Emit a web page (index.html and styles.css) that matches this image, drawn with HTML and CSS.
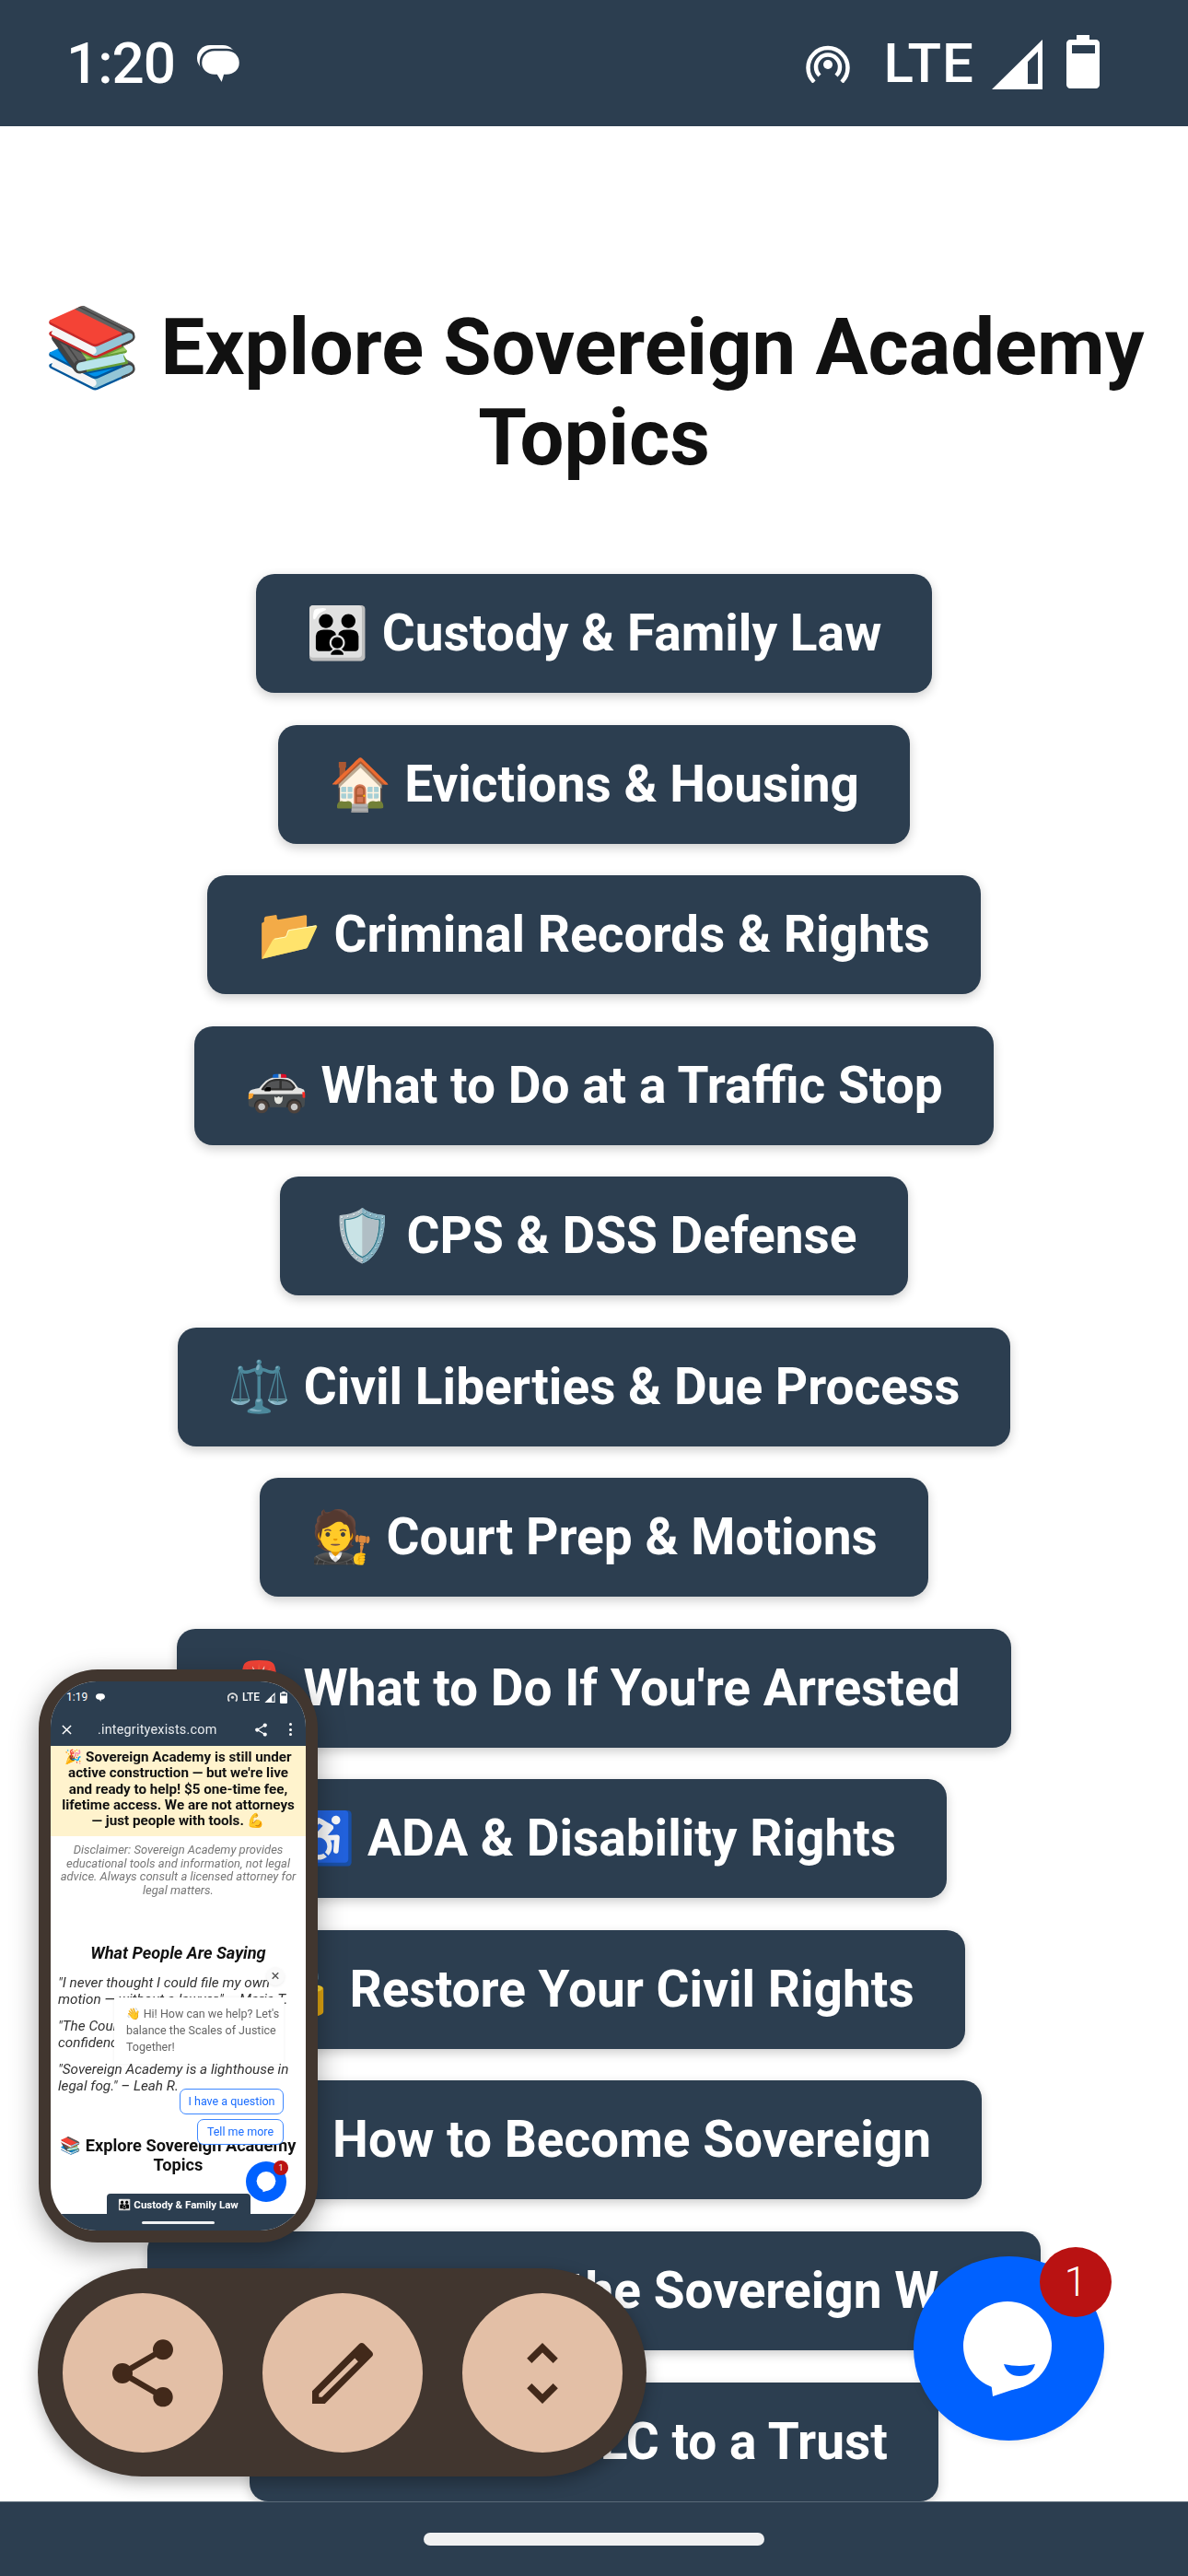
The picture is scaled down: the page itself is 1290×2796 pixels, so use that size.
FILE: index.html
```html
<!DOCTYPE html>
<html lang="en">
<head><meta charset="utf-8"><title>Explore Sovereign Academy Topics</title><link rel="stylesheet" href="styles.css"></head>
<body>
<div class="screen">
  <header class="status">
    <span class="time">1:20</span>
    <svg class="ic-msg" viewBox="0 0 47 43"><rect x="0" y="0" width="42" height="28" rx="14" fill="#fff"/><path fill="#fff" stroke="#2c3e50" stroke-width="2.5" d="M19 5h13c9 0 15 6 15 14s-6 14-15 14h-2l-3 10-6-10h-2C10 33 4 27 4 19S10 5 19 5z"/></svg>
    <div class="status-right">
      <svg class="ic-hot" viewBox="0 0 48 42"><g fill="none" stroke="#fff" stroke-width="4.5" stroke-linecap="butt"><path d="M9 41A21.5 21.5 0 1 1 39 41"/><path d="M15 34A13 13 0 1 1 33 34"/></g><circle cx="24" cy="22" r="5" fill="#fff"/></svg>
      <span class="lte">LTE</span>
      <svg class="ic-sig" viewBox="0 0 55 54"><path fill="#fff" fill-rule="evenodd" d="M55 0V54H0ZM50 13 39 24V48H50Z"/></svg>
      <svg class="ic-bat" viewBox="0 0 36 58"><path fill="#fff" fill-rule="evenodd" d="M11 0h14v5h7c2 0 4 2 4 4v45c0 2-2 4-4 4H4c-2 0-4-2-4-4V9c0-2 2-4 4-4h7ZM6 11v9h25v-9Z"/></svg>
    </div>
  </header>

  <main class="main">
    <h1 class="title">📚 Explore Sovereign Academy Topics</h1>
    <nav class="list">
      <a class="btn">👪 Custody &amp; Family Law</a>
      <a class="btn">🏠 Evictions &amp; Housing</a>
      <a class="btn">📂 Criminal Records &amp; Rights</a>
      <a class="btn">🚓 What to Do at a Traffic Stop</a>
      <a class="btn">🛡️ CPS &amp; DSS Defense</a>
      <a class="btn">⚖️ Civil Liberties &amp; Due Process</a>
      <a class="btn">🧑‍⚖️ Court Prep &amp; Motions</a>
      <a class="btn">🚨 What to Do If You're Arrested</a>
      <a class="btn">♿ ADA &amp; Disability Rights</a>
      <a class="btn">🔓 Restore Your Civil Rights</a>
      <a class="btn">👑 How to Become Sovereign</a>
      <a class="btn">💼 Do Business the Sovereign Way</a>
      <a class="btn">🏛️ Deed an LLC to a Trust</a>
    </nav>
  </main>

  <footer class="navbar"><span class="handle"></span></footer>

  <aside class="phone">
    <div class="phone-inner">
      <div class="m-status">
        <span>1:19</span>
        <svg class="m-ic-msg" viewBox="0 0 47 43"><path fill="#fff" d="M19 5h13c9 0 15 6 15 14s-6 14-15 14h-2l-3 10-6-10h-2C10 33 4 27 4 19S10 5 19 5z"/></svg>
        <div class="m-right">
          <svg class="m-ic-hot" viewBox="0 0 48 42"><path fill="none" stroke="#ddd" stroke-width="8" d="M9 41A21.5 21.5 0 1 1 39 41"/><circle cx="24" cy="22" r="7" fill="#ddd"/></svg>
          <span class="m-lte">LTE</span>
          <svg class="m-ic-sig" viewBox="0 0 55 54"><path fill="#fff" fill-rule="evenodd" d="M55 0V54H0ZM50 13 39 24V48H50Z"/></svg>
          <svg class="m-ic-bat" viewBox="0 0 36 58"><path fill="#fff" fill-rule="evenodd" d="M11 0h14v5h7c2 0 4 2 4 4v45c0 2-2 4-4 4H4c-2 0-4-2-4-4V9c0-2 2-4 4-4h7ZM6 11v9h25v-9Z"/></svg>
        </div>
      </div>
      <div class="m-toolbar">
        <svg class="m-x" viewBox="0 0 12 12"><path d="M1 1 11 11M11 1 1 11" stroke="#fff" stroke-width="1.6"/></svg>
        <span class="m-url">.integrityexists.com</span>
        <svg class="m-share" viewBox="0 0 24 24"><path fill="#fff" d="M18 16.08c-.76 0-1.44.3-1.96.77L8.91 12.7c.05-.23.09-.46.09-.7s-.04-.47-.09-.7l7.05-4.11c.54.5 1.25.81 2.04.81 1.66 0 3-1.34 3-3s-1.34-3-3-3-3 1.34-3 3c0 .24.04.47.09.7L8.04 9.81C7.5 9.31 6.79 9 6 9c-1.66 0-3 1.34-3 3s1.34 3 3 3c.79 0 1.5-.31 2.04-.81l7.12 4.16c-.05.21-.08.43-.08.65 0 1.61 1.31 2.92 2.92 2.92s2.92-1.31 2.92-2.92-1.31-2.92-2.92-2.92z"/></svg>
        <span class="m-dots"><i></i><i></i><i></i></span>
      </div>
      <div class="m-page">
        <div class="m-banner">🎉 Sovereign Academy is still under active construction — but we're live and ready to help! $5 one-time fee, lifetime access. We are not attorneys — just people with tools. 💪</div>
        <p class="m-disc">Disclaimer: Sovereign Academy provides educational tools and information, not legal advice. Always consult a licensed attorney for legal matters.</p>
        <h3 class="m-h3">What People Are Saying</h3>
        <p class="m-q">"I never thought I could file my own motion — without a lawyer." – Maria T.</p>
        <p class="m-q">"The Court Prep guide gave me confidence at my hearing."</p>
        <p class="m-q">"Sovereign Academy is a lighthouse in legal fog." – Leah R.</p>
        <h2 class="m-h2">📚 Explore Sovereign Academy Topics</h2>
        <a class="m-btn">👪 Custody &amp; Family Law</a>
      </div>
      <div class="m-nav"><span class="m-handle"></span></div>

      <span class="m-close">×</span>
      <div class="m-pop">👋 Hi! How can we help? Let's<br>balance the Scales of Justice<br>Together!</div>
      <span class="m-chip m-chip-a">I have a question</span>
      <span class="m-chip m-chip-b">Tell me more</span>
      <span class="m-fab">
        <svg viewBox="0 0 204 200"><circle cx="102" cy="97" r="48" fill="#fff"/><path fill="#fff" d="M84 136 86 152 122 140Z"/></svg>
      </span>
      <span class="m-badge">1</span>
    </div>
  </aside>

  <aside class="pill">
    <span class="pill-btn"><svg viewBox="0 0 24 24"><path d="M18 16.08c-.76 0-1.44.3-1.96.77L8.91 12.7c.05-.23.09-.46.09-.7s-.04-.47-.09-.7l7.05-4.11c.54.5 1.25.81 2.04.81 1.66 0 3-1.34 3-3s-1.34-3-3-3-3 1.34-3 3c0 .24.04.47.09.7L8.04 9.81C7.5 9.31 6.79 9 6 9c-1.66 0-3 1.34-3 3s1.34 3 3 3c.79 0 1.5-.31 2.04-.81l7.12 4.16c-.05.21-.08.43-.08.65 0 1.61 1.31 2.92 2.92 2.92s2.92-1.31 2.92-2.92-1.31-2.92-2.92-2.92z"/></svg></span>
    <span class="pill-btn"><svg viewBox="0 0 24 24"><path fill-rule="evenodd" d="M3 21V17.25L16.96 3.29c.39-.39 1.02-.39 1.41 0l2.34 2.34c.39.39.39 1.02 0 1.41L6.75 21ZM5 19V18.1L15.6 7.5l1 1L5.9 19Z"/></svg></span>
    <span class="pill-btn"><svg viewBox="0 0 24 24"><path d="M12 5.83L15.17 9l1.41-1.41L12 3 7.41 7.59 8.83 9 12 5.83zm0 12.34L8.83 15l-1.41 1.41L12 21l4.59-4.59L15.17 15 12 18.17z"/></svg></span>
  </aside>

  <aside class="fab">
    <svg viewBox="0 0 207 200"><circle cx="102" cy="97" r="48" fill="#fff"/><path fill="#fff" d="M84 136 86 152 122 140Z"/><path fill="#0061ff" d="M98 117Q115 121 132 117Q128 130 115 130Q102 130 98 117Z"/></svg>
  </aside>
  <span class="fab-badge">1</span>
</div>
</body>
</html>
```
FILE: styles.css
```css
html,body{margin:0;padding:0}
body{width:1290px;height:2796px;overflow:hidden;background:#fff;font-family:Roboto,"Noto Color Emoji",sans-serif}
.screen{position:relative;width:1290px;height:2796px;display:flex;flex-direction:column;overflow:hidden}

.status{flex:none;height:137px;background:#2c3e50;color:#fff;display:flex;align-items:center;padding:0 96px 0 72px;box-sizing:border-box}
.time{font-size:62px;font-weight:500;letter-spacing:-1px}
.ic-msg{width:47px;height:43px;margin-left:24px;margin-top:4px}
.status-right{margin-left:auto;display:flex;align-items:center}
.ic-hot{width:48px;height:42px}
.lte{font-size:60px;font-weight:500;margin-left:36px;letter-spacing:1px}
.ic-sig{width:55px;height:54px;margin-left:19px;margin-top:2px}
.ic-bat{width:36px;height:58px;margin-left:26px;margin-top:-4px}

.main{flex:1;min-height:0;overflow:hidden}
.title{margin:191px 20px 0;font-size:85px;line-height:98px;font-weight:700;text-align:center;color:#111}
.list{display:flex;flex-direction:column;align-items:center;gap:34.55px;margin-top:99px}
.btn{flex:none;background:#2c3e50;color:#fff;font-size:55px;line-height:65px;font-weight:700;padding:32px 55px;border-radius:20px;box-shadow:0 4px 12px rgba(0,0,0,.2);white-space:nowrap}

.navbar{flex:none;height:81px;background:#2c3e50;display:flex;align-items:center;justify-content:center;border-top:1px solid #5a6a78;box-sizing:border-box}
.handle{width:370px;height:14px;border-radius:7px;background:#f0f1f2}

.phone{position:absolute;left:42px;top:1812px;width:303px;height:622px;box-sizing:border-box;padding:13px;background:#41362f;border-radius:64px;box-shadow:0 10px 30px rgba(0,0,0,.35)}
.phone-inner{position:relative;height:100%;background:#fff;border-radius:50px;overflow:hidden;display:flex;flex-direction:column;filter:blur(.5px)}
.m-status{flex:none;height:34px;background:#2c3e50;color:#fff;display:flex;align-items:center;padding:0 20px 0 17px;font-size:12px;box-sizing:border-box}
.m-ic-msg{width:11px;height:10px;margin-left:8px}
.m-right{margin-left:auto;display:flex;align-items:center;gap:5px}
.m-ic-hot{width:11px;height:10px}
.m-lte{font-size:12px;font-weight:500}
.m-ic-sig{width:12px;height:11px}
.m-ic-bat{width:8px;height:13px}
.m-toolbar{flex:none;height:36px;background:#2c3e50;display:flex;align-items:center;padding:0 15px 0 12px;box-sizing:border-box;color:#e8ebee}
.m-x{width:11px;height:11px}
.m-url{font-size:14.4px;margin-left:28px;letter-spacing:.2px}
.m-share{width:17px;height:17px;margin-left:auto}
.m-dots{display:flex;flex-direction:column;gap:2.5px;margin-left:22px}
.m-dots i{width:3px;height:3px;border-radius:50%;background:#fff}
.m-page{flex:1;min-height:0;overflow:hidden;text-align:center;color:#111}
.m-banner{height:98px;box-sizing:border-box;padding:4px 6px;background:#fff3cd;font-size:15.2px;line-height:17.3px;font-weight:700}
.m-disc{margin:0;padding:8px 8px 0;font-size:13px;line-height:14.6px;font-style:italic;color:#777}
.m-h3{margin:51px 0 14px;font-size:18.2px;line-height:20px;font-style:italic;font-weight:700}
.m-q{margin:0 0 12px;padding:0 8px;font-size:15.3px;line-height:17.5px;font-style:italic;text-align:left;color:#333}
.m-h2{margin:45px 0 21px;font-size:18.2px;line-height:21px;font-weight:700}
.m-btn{display:block;width:156px;height:40px;margin:0 auto;box-sizing:border-box;padding-top:4px;background:#2c3e50;color:#fff;font-size:11.5px;font-weight:700;line-height:16px;border-radius:4px;white-space:nowrap}
.m-nav{flex:none;height:18px;background:#2c3e50;display:flex;align-items:center;justify-content:center}
.m-handle{width:79px;height:3px;border-radius:2px;background:#f0f1f2}
.m-close{position:absolute;left:234px;top:310px;width:20px;height:20px;border-radius:50%;background:#fafafa;color:#555;font-size:17px;line-height:18px;text-align:center;box-shadow:0 1px 3px rgba(0,0,0,.08)}
.m-pop{position:absolute;left:69px;top:343px;width:184px;height:72px;box-sizing:border-box;padding:9px 0 0 13px;background:#fff;font-size:12.5px;line-height:18px;color:#666;white-space:nowrap;box-shadow:0 0 4px rgba(0,0,0,.06)}
.m-chip{position:absolute;height:28px;box-sizing:border-box;background:#fff;border:1px solid #3d87ff;border-radius:7px;color:#1a6dff;font-size:12.5px;line-height:26px;text-align:center}
.m-chip-a{left:140px;top:442px;width:113px}
.m-chip-b{left:159px;top:475px;width:94px}
.m-fab{position:absolute;left:212px;top:521px;width:44px;height:44px;border-radius:50%;background:#0061ff}
.m-fab svg{display:block;width:44px;height:44px}
.m-badge{position:absolute;left:242px;top:520px;width:16px;height:16px;border-radius:50%;background:#b91212;color:#fff;font-size:9px;line-height:16px;text-align:center}

.pill{position:absolute;left:41px;top:2462px;width:661px;height:226px;box-sizing:border-box;padding:27px;display:flex;gap:43px;background:#41362f;border-radius:113px;box-shadow:0 6px 18px rgba(0,0,0,.3)}
.pill-btn{flex:none;width:174px;height:173px;border-radius:50%;background:#e3bfa6;display:flex;align-items:center;justify-content:center}
.pill-btn svg{width:88px;height:88px;fill:#42291a}

.fab{position:absolute;left:992px;top:2449px;width:207px;height:200px;border-radius:50%;background:#0061ff;box-shadow:0 2px 8px rgba(0,0,0,.08)}
.fab svg{display:block;width:207px;height:200px}
.fab-badge{position:absolute;left:1129px;top:2439px;width:78px;height:76px;border-radius:50%;background:#b91212;color:#fff;font-size:44px;font-weight:300;line-height:76px;text-align:center}
```
